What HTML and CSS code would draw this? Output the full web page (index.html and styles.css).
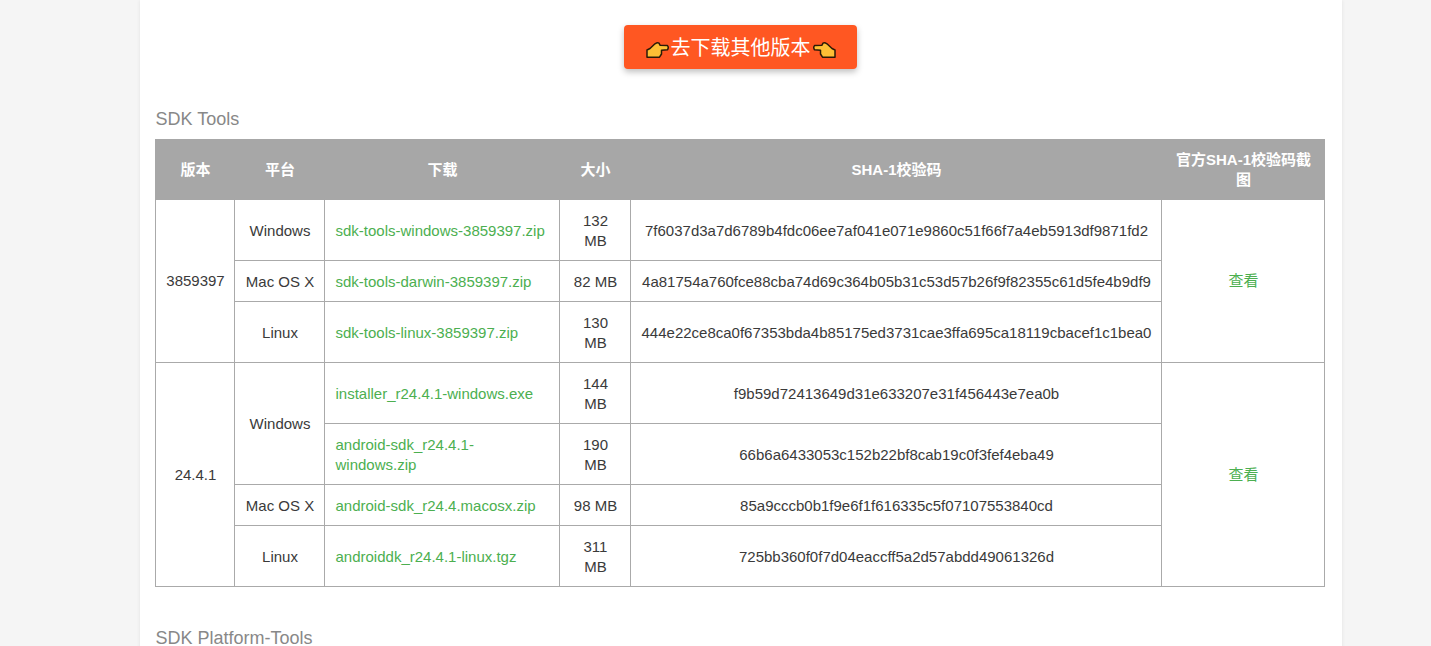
FILE: index.html
```html
<!DOCTYPE html>
<html lang="zh-CN">
<head>
<meta charset="utf-8">
<title>SDK Tools</title>
<link rel="stylesheet" href="styles.css">
</head>
<body>
<main class="card">
  <div class="cta-wrap">
    <a class="cta" href="#">
      <svg class="hand" viewBox="0 0 23 16" width="23" height="16"><path d="M1 15.200 V8 L4 6.500 L9 1.800 Q11.500 0.300 13 1.200 L14 3.200 L21.500 3.600 Q23 5.500 21.500 7.800 L15.500 8.200 L15.500 12 L13.500 15.200 Z" fill="#fdbf35" stroke="#2a1a08" stroke-width="1.500" stroke-linejoin="round"/></svg>
      <span>去下载其他版本</span>
      <svg class="hand hand-flip" viewBox="0 0 23 16" width="23" height="16"><path d="M1 15.200 V8 L4 6.500 L9 1.800 Q11.500 0.300 13 1.200 L14 3.200 L21.500 3.600 Q23 5.500 21.500 7.800 L15.500 8.200 L15.500 12 L13.500 15.200 Z" fill="#fdbf35" stroke="#2a1a08" stroke-width="1.500" stroke-linejoin="round"/></svg>
    </a>
  </div>
  <h2 class="section-title">SDK Tools</h2>
  <table class="sdk-table">
    <colgroup>
      <col class="c-ver"><col class="c-os"><col class="c-dl"><col class="c-size"><col class="c-sha"><col class="c-shot">
    </colgroup>
    <thead>
      <tr><th>版本</th><th>平台</th><th>下载</th><th>大小</th><th>SHA-1校验码</th><th>官方SHA-1校验码截图</th></tr>
    </thead>
    <tbody>
      <tr>
        <td class="ver span" rowspan="3">3859397</td><td>Windows</td>
        <td class="dl"><a href="#">sdk-tools-windows-3859397.zip</a></td><td>132 MB</td>
        <td>7f6037d3a7d6789b4fdc06ee7af041e071e9860c51f66f7a4eb5913df9871fd2</td>
        <td class="span" rowspan="3"><a href="#">查看</a></td>
      </tr>
      <tr>
        <td>Mac OS X</td>
        <td class="dl"><a href="#">sdk-tools-darwin-3859397.zip</a></td><td>82 MB</td>
        <td>4a81754a760fce88cba74d69c364b05b31c53d57b26f9f82355c61d5fe4b9df9</td>
      </tr>
      <tr>
        <td>Linux</td>
        <td class="dl"><a href="#">sdk-tools-linux-3859397.zip</a></td><td>130 MB</td>
        <td>444e22ce8ca0f67353bda4b85175ed3731cae3ffa695ca18119cbacef1c1bea0</td>
      </tr>
      <tr>
        <td class="ver span" rowspan="4">24.4.1</td><td class="span" rowspan="2">Windows</td>
        <td class="dl"><a href="#">installer_r24.4.1-windows.exe</a></td><td>144 MB</td>
        <td>f9b59d72413649d31e633207e31f456443e7ea0b</td>
        <td class="span" rowspan="4"><a href="#">查看</a></td>
      </tr>
      <tr>
        <td class="dl"><a href="#">android-sdk_r24.4.1-windows.zip</a></td><td>190 MB</td>
        <td>66b6a6433053c152b22bf8cab19c0f3fef4eba49</td>
      </tr>
      <tr>
        <td>Mac OS X</td>
        <td class="dl"><a href="#">android-sdk_r24.4.macosx.zip</a></td><td>98 MB</td>
        <td>85a9cccb0b1f9e6f1f616335c5f07107553840cd</td>
      </tr>
      <tr>
        <td>Linux</td>
        <td class="dl"><a href="#">androiddk_r24.4.1-linux.tgz</a></td><td>311 MB</td>
        <td>725bb360f0f7d04eaccff5a2d57abdd49061326d</td>
      </tr>
    </tbody>
  </table>
  <h2 class="section-title section-next">SDK Platform-Tools</h2>
</main>
</body>
</html>
```
FILE: styles.css
```css
html, body {
  margin: 0;
  padding: 0;
  height: 646px;
  overflow: hidden;
  background: #f5f5f5;
}
body {
  font-family: "Liberation Sans", "Noto Sans CJK SC", sans-serif;
  font-size: 15px;
  line-height: 20px;
  color: #3a3a3a;
}
.card {
  width: 1171px;
  height: 646px;
  margin-left: 140px;
  padding: 25px 16px 0 15px;
  background: #fff;
  box-shadow: 0 0 4px rgba(0, 0, 0, 0.08);
  overflow: hidden;
}
.cta-wrap {
  display: flex;
  justify-content: center;
}
.cta {
  display: flex;
  align-items: center;
  justify-content: center;
  gap: 2px;
  box-sizing: border-box;
  width: 233px;
  height: 44px;
  padding-top: 2px;
  border-radius: 4px;
  background: #ff5722;
  color: #fff;
  font-size: 20px;
  text-decoration: none;
  box-shadow: 0 3px 6px rgba(0, 0, 0, 0.25);
}
.hand {
  flex: none;
  margin-top: 4px;
}
.hand-flip { transform: scaleX(-1); }
.section-title {
  margin: 40px 0 9px 0.500px;
  font-size: 18px;
  line-height: 21px;
  font-weight: 400;
  color: #888;
}
.section-next { margin-top: 41px; }
.sdk-table {
  width: 1169px;
  table-layout: fixed;
  border-collapse: collapse;
}
.c-ver { width: 79px; }
.c-os { width: 90px; }
.c-dl { width: 235px; }
.c-size { width: 71px; }
.c-sha { width: 531px; }
.c-shot { width: 163px; }
.sdk-table th, .sdk-table td {
  padding: 11px 9.500px 9px 10.500px;
  border: 1px solid #aaa;
  text-align: center;
  vertical-align: middle;
  word-wrap: break-word;
}
.sdk-table th {
  padding: 10px 9.500px 9px 10.500px;
  background: #a7a7a7;
  border-color: #a7a7a7;
  color: #fff;
  font-weight: 700;
}
.sdk-table td.span {
  padding-top: 9px;
  padding-bottom: 9px;
}
.sdk-table td.ver {
  padding-left: 5.500px;
  padding-right: 4.500px;
}
.sdk-table td.dl { text-align: left; }
.sdk-table a {
  color: #4caf50;
  text-decoration: none;
}
```
